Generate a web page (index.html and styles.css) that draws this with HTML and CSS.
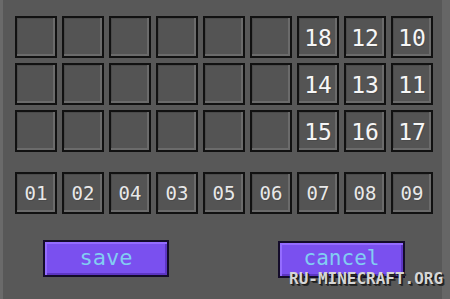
FILE: index.html
```html
<!DOCTYPE html>
<html lang="en">
<head>
  <meta charset="UTF-8">
  <meta name="viewport" content="width=device-width, initial-scale=1.0">
  <title>Slots</title>
  <link rel="stylesheet" href="styles.css">
</head>
<body>
  <div class="window">
    <div class="grid">
      <div class="slot"></div>
      <div class="slot"></div>
      <div class="slot"></div>
      <div class="slot"></div>
      <div class="slot"></div>
      <div class="slot"></div>
      <div class="slot num">18</div>
      <div class="slot num">12</div>
      <div class="slot num">10</div>
      <div class="slot"></div>
      <div class="slot"></div>
      <div class="slot"></div>
      <div class="slot"></div>
      <div class="slot"></div>
      <div class="slot"></div>
      <div class="slot num">14</div>
      <div class="slot num">13</div>
      <div class="slot num">11</div>
      <div class="slot"></div>
      <div class="slot"></div>
      <div class="slot"></div>
      <div class="slot"></div>
      <div class="slot"></div>
      <div class="slot"></div>
      <div class="slot num">15</div>
      <div class="slot num">16</div>
      <div class="slot num">17</div>
    </div>

    <div class="grid hotbar">
      <div class="slot small">01</div>
      <div class="slot small">02</div>
      <div class="slot small">04</div>
      <div class="slot small">03</div>
      <div class="slot small">05</div>
      <div class="slot small">06</div>
      <div class="slot small">07</div>
      <div class="slot small">08</div>
      <div class="slot small">09</div>
    </div>

    <div class="actions">
      <button class="btn save">save</button>
      <button class="btn cancel">cancel</button>
    </div>

    <div class="watermark">RU-MINECRAFT.ORG</div>
  </div>
</body>
</html>
```

FILE: styles.css
```css
body {
  margin: 0;
  width: 450px;
  height: 299px;
  overflow: hidden;
  background: #595959;
  font-family: "DejaVu Sans Mono", monospace;
}

.window {
  position: relative;
  box-sizing: border-box;
  width: 450px;
  height: 299px;
  padding: 16px 0 0 12px;
  border-left: 3px solid #6a6a6a;
  border-right: 8px solid #666666;
  background: #585858;
}

.grid {
  display: grid;
  grid-template-columns: repeat(9, 42px);
  grid-auto-rows: 42px;
  gap: 5px;
}

.hotbar {
  margin-top: 20px;
}

.slot {
  box-sizing: border-box;
  border: 2px solid #111111;
  background: #545454;
  box-shadow: inset -2px -2px 0 #6b6b6b, inset 1px 1px 0 #4a4a4a;
  display: flex;
  align-items: center;
  justify-content: center;
  color: #f6f6f6;
  text-shadow: 1px 1px 0 #4a4a4a;
}

.num {
  font-size: 23px;
  padding-top: 1px;
}

.small {
  font-size: 19px;
  color: #e8e8e8;
}

.actions {
  display: flex;
  gap: 109px;
  margin: 26px 0 0 28px;
}

.btn {
  box-sizing: border-box;
  width: 126px;
  height: 37px;
  border: 2px solid #140c2a;
  background: #7a50ef;
  box-shadow: inset 2px 2px 0 #946cff, inset -2px -2px 0 #5d36c4;
  color: #82cdf2;
  font-family: "DejaVu Sans Mono", monospace;
  font-size: 21px;
  padding: 0 0 3px;
  cursor: pointer;
}

.save {
  font-size: 22px;
}

.cancel {
  margin-top: 1px;
  width: 127px;
}

.watermark {
  position: absolute;
  left: 286px;
  top: 269px;
  white-space: nowrap;
  font-family: "DejaVu Sans Mono", monospace;
  font-weight: bold;
  font-size: 16px;
  color: #d6d6d6;
  text-shadow: 1px 1px 0 #1e1e1e, 2px 2px 0 #2a2a2a;
}
```
